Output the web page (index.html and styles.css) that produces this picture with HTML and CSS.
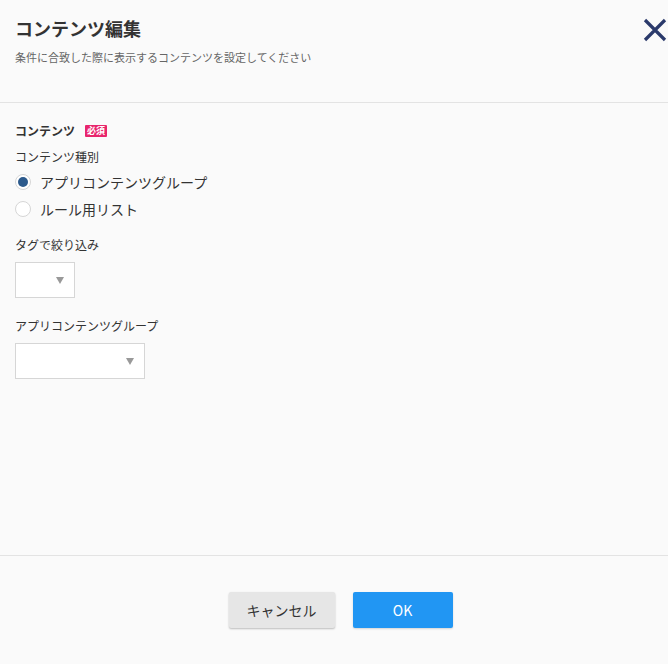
FILE: index.html
```html
<!DOCTYPE html>
<html lang="ja">
<head>
    <meta charset="UTF-8">
    <title>コンテンツ編集</title>
    <link rel="stylesheet" href="styles.css">
</head>
<body>
    <div class="modal">
        <div class="modal-header">
            <h2 class="title">コンテンツ編集</h2>
            <p class="subtitle">条件に合致した際に表示するコンテンツを設定してください</p>
            <span class="close">
                <svg width="24" height="24" viewBox="0 0 24 24">
                    <path d="M2 2 L22 22 M22 2 L2 22" stroke="#2b3a6b" stroke-width="3.2" fill="none"/>
                </svg>
            </span>
        </div>
        <div class="modal-body">
            <div class="section-label">コンテンツ <span class="badge">必須</span></div>
            <div class="field-label">コンテンツ種別</div>
            <label class="radio"><span class="radio-mark checked"></span>アプリコンテンツグループ</label>
            <label class="radio"><span class="radio-mark"></span>ルール用リスト</label>

            <div class="field-label tag-label">タグで絞り込み</div>
            <div class="select select-small"><span class="arrow"></span></div>

            <div class="field-label group-label">アプリコンテンツグループ</div>
            <div class="select select-wide"><span class="arrow"></span></div>
        </div>
        <div class="modal-footer">
            <button class="btn btn-cancel">キャンセル</button>
            <button class="btn btn-ok">OK</button>
        </div>
    </div>
</body>
</html>
```

FILE: styles.css
```css
body {
    margin: 0;
    background-color: #fafafa;
    font-family: "Noto Sans CJK JP", "Noto Sans", sans-serif;
    color: #333;
}
.modal {
    width: 668px;
    height: 664px;
    display: flex;
    flex-direction: column;
}
.modal-header {
    position: relative;
    height: 103px;
    box-sizing: border-box;
    padding: 14px 15px 0;
    border-bottom: 1px solid #e3e3e3;
}
.title {
    margin: 0;
    font-size: 18px;
    font-weight: bold;
    line-height: 28px;
    color: #333;
}
.subtitle {
    margin: 7px 0 0;
    font-size: 11px;
    line-height: 16px;
    color: #666;
}
.close {
    position: absolute;
    top: 18px;
    right: 1px;
    width: 24px;
    height: 24px;
}
.modal-body {
    height: 453px;
    box-sizing: border-box;
    padding: 20px 15px 0;
    border-bottom: 1px solid #e3e3e3;
}
.section-label {
    font-size: 12px;
    font-weight: bold;
    line-height: 16px;
    display: flex;
    align-items: center;
}
.badge {
    display: inline-block;
    margin-left: 10px;
    background-color: #e8256c;
    color: #fff;
    font-size: 9px;
    line-height: 12px;
    padding: 0 2px;
    border-radius: 1px;
}
.field-label {
    font-size: 12px;
    line-height: 16px;
    margin-top: 10px;
    color: #333;
}
.radio {
    display: flex;
    align-items: center;
    font-size: 14px;
    line-height: 20px;
    height: 27px;
    color: #333;
}
.radio:first-of-type {
    margin-top: 3px;
}
.radio-mark {
    width: 14px;
    height: 14px;
    border: 1px solid #d6d6d6;
    border-radius: 50%;
    background-color: #fff;
    margin-right: 9px;
    position: relative;
}
.radio-mark.checked::after {
    content: "";
    position: absolute;
    left: 2px;
    top: 2px;
    width: 10px;
    height: 10px;
    border-radius: 50%;
    background-color: #2c5a8c;
}
.tag-label {
    margin-top: 15px;
}
.group-label {
    margin-top: 20px;
}
.select {
    margin-top: 9px;
    height: 36px;
    box-sizing: border-box;
    border: 1px solid #d6d6d6;
    background-color: #fff;
    position: relative;
}
.select-small {
    width: 60px;
}
.select-wide {
    width: 130px;
}
.arrow {
    position: absolute;
    right: 10px;
    top: 14px;
    width: 0;
    height: 0;
    border-left: 4px solid transparent;
    border-right: 4px solid transparent;
    border-top: 7px solid #999;
}
.modal-footer {
    flex: 1;
    display: flex;
    justify-content: center;
    gap: 18px;
    padding-top: 36px;
    padding-left: 13px;
    box-sizing: border-box;
}
.btn {
    height: 36px;
    border: none;
    border-radius: 2px;
    font-family: inherit;
    font-size: 14px;
    cursor: pointer;
}
.btn-cancel {
    width: 106px;
    background-color: #e6e6e6;
    color: #333;
    box-shadow: 0 1px 2px rgba(0,0,0,.25);
}
.btn-ok {
    width: 100px;
    background-color: #2196f3;
    color: #fff;
    box-shadow: 0 1px 2px rgba(0,0,0,.15);
}
```
